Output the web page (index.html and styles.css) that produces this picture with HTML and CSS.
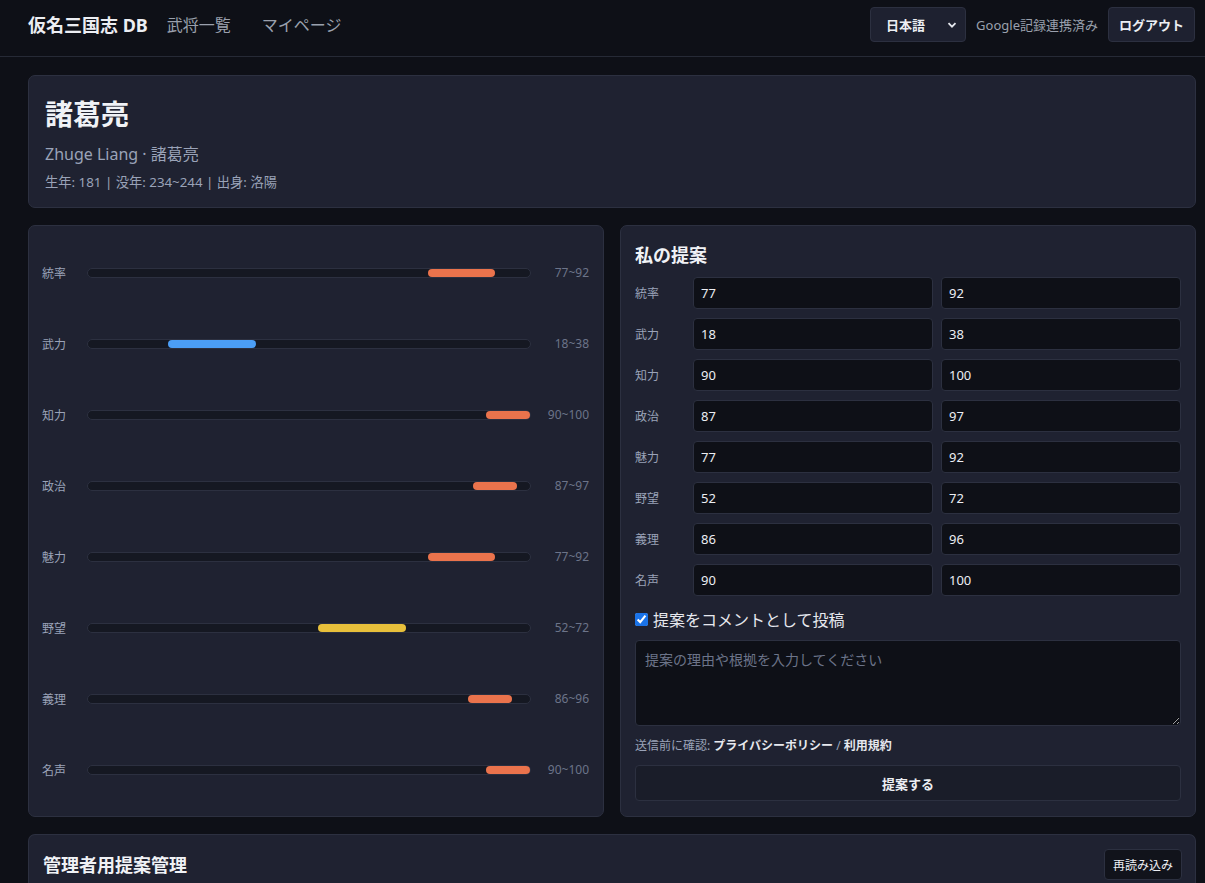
FILE: index.html
```html
<!DOCTYPE html>
<html lang="ja">
<head>
<meta charset="utf-8">
<title>諸葛亮 - 仮名三国志 DB</title>
<link rel="stylesheet" href="styles.css">
</head>
<body>
<header class="nav">
  <div class="nav-left">
    <span class="brand">仮名三国志 DB</span>
    <a class="nav-link" href="#">武将一覧</a>
    <a class="nav-link" href="#">マイページ</a>
  </div>
  <div class="nav-right">
    <div class="select"><span>日本語</span>
      <svg width="10" height="10" viewBox="0 0 10 10"><path d="M1.5 3.2 5 6.7 8.5 3.2" fill="none" stroke="#e6e8ee" stroke-width="1.8"/></svg>
    </div>
    <span class="linked">Google記録連携済み</span>
    <button class="btn">ログアウト</button>
  </div>
</header>

<main class="container">
  <section class="card hero">
    <h1>諸葛亮</h1>
    <p class="sub">Zhuge Liang · 諸葛亮</p>
    <p class="meta">生年: 181 | 没年: 234~244 | 出身: 洛陽</p>
  </section>

  <div class="cols">
    <section class="card stats">
      <div class="stat"><span class="sl">統率</span><div class="track"><div class="fill orange" style="left:77%;width:15%"></div></div><span class="sv">77~92</span></div>
      <div class="stat"><span class="sl">武力</span><div class="track"><div class="fill blue" style="left:18%;width:20%"></div></div><span class="sv">18~38</span></div>
      <div class="stat"><span class="sl">知力</span><div class="track"><div class="fill orange" style="left:90%;width:10%"></div></div><span class="sv">90~100</span></div>
      <div class="stat"><span class="sl">政治</span><div class="track"><div class="fill orange" style="left:87%;width:10%"></div></div><span class="sv">87~97</span></div>
      <div class="stat"><span class="sl">魅力</span><div class="track"><div class="fill orange" style="left:77%;width:15%"></div></div><span class="sv">77~92</span></div>
      <div class="stat"><span class="sl">野望</span><div class="track"><div class="fill yellow" style="left:52%;width:20%"></div></div><span class="sv">52~72</span></div>
      <div class="stat"><span class="sl">義理</span><div class="track"><div class="fill orange" style="left:86%;width:10%"></div></div><span class="sv">86~96</span></div>
      <div class="stat"><span class="sl">名声</span><div class="track"><div class="fill orange" style="left:90%;width:10%"></div></div><span class="sv">90~100</span></div>
    </section>

    <section class="card proposal">
      <h2>私の提案</h2>
      <div class="grid">
        <span class="pl">統率</span><input class="in" value="77"><input class="in" value="92">
        <span class="pl">武力</span><input class="in" value="18"><input class="in" value="38">
        <span class="pl">知力</span><input class="in" value="90"><input class="in" value="100">
        <span class="pl">政治</span><input class="in" value="87"><input class="in" value="97">
        <span class="pl">魅力</span><input class="in" value="77"><input class="in" value="92">
        <span class="pl">野望</span><input class="in" value="52"><input class="in" value="72">
        <span class="pl">義理</span><input class="in" value="86"><input class="in" value="96">
        <span class="pl">名声</span><input class="in" value="90"><input class="in" value="100">
      </div>
      <label class="check"><input type="checkbox" checked> 提案をコメントとして投稿</label>
      <textarea class="ta" placeholder="提案の理由や根拠を入力してください"></textarea>
      <p class="note">送信前に確認: <a href="#">プライバシーポリシー</a> / <a href="#">利用規約</a></p>
      <button class="submit">提案する</button>
    </section>
  </div>

  <section class="card admin">
    <h2>管理者用提案管理</h2>
    <button class="btn small">再読み込み</button>
  </section>
</main>
</body>
</html>
```

FILE: styles.css
```css
* { box-sizing: border-box; }
html, body { margin: 0; }
body {
  background: #0e1017;
  color: #e6e8ee;
  font-family: "Noto Sans", "Noto Sans CJK JP", sans-serif;
  font-size: 14px;
}
.nav {
  height: 57px;
  border-bottom: 1px solid #262a36;
  display: flex;
  align-items: flex-start;
  justify-content: space-between;
  padding: 7px 10px 0 28px;
}
.nav-left { display: flex; align-items: center; height: 33px; }
.brand { font-weight: 700; font-size: 18px; margin-right: 19px; color: #eceef3; }
.nav-link { color: #9aa0ad; text-decoration: none; font-size: 16px; margin-right: 31px; }
.nav-right { display: flex; align-items: center; gap: 10px; }
.select {
  width: 96px; height: 35px;
  background: #1e2130; border: 1px solid #2c3040; border-radius: 4px;
  display: flex; align-items: center; justify-content: space-between;
  padding: 0 8px 0 15px;
  font-weight: 700; font-size: 13px; color: #eceef3;
}
.linked { color: #9aa0ad; font-size: 13px; }
.btn {
  height: 35px; padding: 0 10px;
  background: #1e2130; border: 1px solid #2c3040; border-radius: 4px;
  color: #eceef3; font-family: inherit; font-weight: 700; font-size: 13px;
}
.container { padding: 18px 9px 0 28px; display: flex; flex-direction: column; gap: 17px; }
.card {
  background: #1f2231;
  border: 1px solid #2c3040;
  border-radius: 7px;
}
.hero { padding: 14px 16px 14px 16px; height: 133px; }
.hero h1 { margin: 0; font-size: 28px; line-height: 48px; font-weight: 700; color: #f0f2f6; }
.hero .sub { margin: 4px 0 0; font-size: 16px; line-height: 24px; color: #9aa3b8; }
.hero .meta { margin: 6px 0 0; font-size: 13.3px; line-height: 20px; color: #9aa3b8; }

.cols { display: grid; grid-template-columns: 1fr 1fr; gap: 16px; }
.stats { display: flex; flex-direction: column; padding: 11px 14px 11px 13px; }
.stat { flex: 1; display: grid; grid-template-columns: 45px 1fr 58px; align-items: center; }
.sl { font-size: 12px; color: #9aa3b8; }
.sv { font-size: 12px; color: #6c7489; text-align: right; }
.track {
  position: relative; height: 10px;
  background: #151822; border: 1px solid #2c3040; border-radius: 6px;
}
.fill { position: absolute; top: 0; height: 8px; border-radius: 5px; }
.orange { background: #ea734c; }
.blue { background: #4b9ef6; }
.yellow { background: #e8c03b; }

.proposal { padding: 14px 14px 15px 14px; }
.proposal h2 { margin: 0 0 7px; font-size: 18px; line-height: 30px; font-weight: 700; color: #f0f2f6; }
.grid { display: grid; grid-template-columns: 50px 1fr 1fr; column-gap: 8px; row-gap: 9px; align-items: center; }
.pl { font-size: 12px; color: #9aa3b8; }
.in {
  height: 32px; width: 100%;
  background: #0e1017; border: 1px solid #2c3040; border-radius: 4px;
  color: #eceef3; font-family: inherit; font-size: 13px; padding: 0 7px;
}
.check { display: flex; align-items: center; gap: 5px; margin-top: 11px; font-size: 16px; color: #e6e8ee; height: 24px; }
.check input { margin: 0; width: 13px; height: 13px; accent-color: #1a73e8; }
.ta {
  display: block; width: 100%; height: 86px; margin-top: 9px;
  background: #0e1017; border: 1px solid #2c3040; border-radius: 4px;
  color: #eceef3; font-family: inherit; font-size: 14px; padding: 8px 9px;
}
.ta::placeholder { color: #6c7489; }
.note { margin: 8px 0 0; font-size: 12px; line-height: 24px; color: #9aa3b8; }
.note a { color: #e6e8ee; font-weight: 700; text-decoration: none; }
.submit {
  display: block; width: 100%; height: 36px; margin-top: 7px;
  background: #1a1d29; border: 1px solid #2c3040; border-radius: 4px;
  color: #eceef3; font-family: inherit; font-weight: 700; font-size: 13px;
}
.admin { display: flex; justify-content: space-between; align-items: flex-start; padding: 14px 13px 0 14px; height: 60px; border-bottom: none; border-radius: 7px 7px 0 0; }
.admin h2 { margin: 0; font-size: 18px; line-height: 32px; font-weight: 700; color: #f0f2f6; }
.btn.small { height: 31px; padding: 0 8px; background: #11131b; font-weight: 400; font-size: 12px; }
```
